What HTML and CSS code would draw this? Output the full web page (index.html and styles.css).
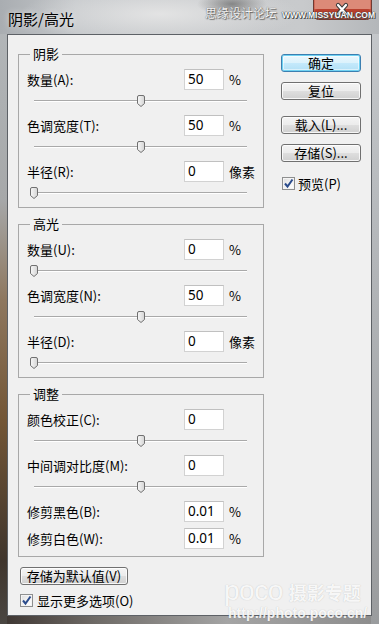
FILE: index.html
```html
<!DOCTYPE html>
<html lang="zh-CN">
<head>
<meta charset="utf-8">
<title>阴影/高光</title>
<link rel="stylesheet" href="styles.css">
</head>
<body>
<div class="window">
  <div class="titlebar">
    <span class="title">阴影/高光</span>
    <span class="capx"><svg width="59" height="20" viewBox="0 0 59 20"><rect x="0.5" y="-5" width="58" height="24.5" rx="5" ry="5" fill="#c8503e" stroke="#6e3a32"/><rect x="1.5" y="9" width="56" height="9.5" rx="4" ry="4" fill="#b8402e"/><rect x="1.5" y="0" width="56" height="9" fill="#dc8a78"/><path d="M25 5 L33 14 M33 5 L25 14" stroke="#3a3a3a" stroke-width="4.2" stroke-linecap="round" fill="none"/><path d="M25 5 L33 14 M33 5 L25 14" stroke="#ffffff" stroke-width="2.2" stroke-linecap="round" fill="none"/></svg></span>
    <span class="wm-top"><span class="wm-cn">思缘设计论坛</span><span class="wm-en">WWW.MISSYUAN.COM</span></span>
  </div>
  <div class="client">
    <div class="main">
      <div class="left">
        <fieldset class="group">
          <legend>阴影</legend>
          <div class="row"><span class="label">数量(A):</span><span class="input">50</span><span class="unit">%</span></div>
          <div class="slider"><div class="track"></div><span class="thumb" style="left:50%"></span></div>
          <div class="row"><span class="label">色调宽度(T):</span><span class="input">50</span><span class="unit">%</span></div>
          <div class="slider"><div class="track"></div><span class="thumb" style="left:50%"></span></div>
          <div class="row"><span class="label">半径(R):</span><span class="input">0</span><span class="unit">像素</span></div>
          <div class="slider"><div class="track"></div><span class="thumb" style="left:0%"></span></div>
        </fieldset>
        <fieldset class="group">
          <legend>高光</legend>
          <div class="row"><span class="label">数量(U):</span><span class="input">0</span><span class="unit">%</span></div>
          <div class="slider"><div class="track"></div><span class="thumb" style="left:0%"></span></div>
          <div class="row"><span class="label">色调宽度(N):</span><span class="input">50</span><span class="unit">%</span></div>
          <div class="slider"><div class="track"></div><span class="thumb" style="left:50%"></span></div>
          <div class="row"><span class="label">半径(D):</span><span class="input">0</span><span class="unit">像素</span></div>
          <div class="slider"><div class="track"></div><span class="thumb" style="left:0%"></span></div>
        </fieldset>
        <fieldset class="group group-last">
          <legend>调整</legend>
          <div class="row"><span class="label">颜色校正(C):</span><span class="input">0</span><span class="unit"></span></div>
          <div class="slider"><div class="track"></div><span class="thumb" style="left:50%"></span></div>
          <div class="row"><span class="label">中间调对比度(M):</span><span class="input">0</span><span class="unit"></span></div>
          <div class="slider"><div class="track"></div><span class="thumb" style="left:50%"></span></div>
          <div class="row row-tight"><span class="label">修剪黑色(B):</span><span class="input">0.01</span><span class="unit">%</span></div>
          <div class="row"><span class="label">修剪白色(W):</span><span class="input">0.01</span><span class="unit">%</span></div>
        </fieldset>
      </div>
      <div class="right">
        <div class="btn btn-default btn-ok">确定</div>
        <div class="btn btn-reset">复位</div>
        <div class="btn btn-load">载入(L)...</div>
        <div class="btn btn-save">存储(S)...</div>
        <div class="check check-preview">
          <span class="box"><svg width="11" height="11" viewBox="0 0 11 11"><path d="M2 5.5 L4.5 8.5 L9.5 1.5" stroke="#2b4c8c" stroke-width="2" fill="none"/></svg></span>
          <span>预览(P)</span>
        </div>
      </div>
    </div>
    <div class="bottom">
      <div class="btn btn-wide">存储为默认值(V)</div>
      <div class="check check-more">
        <span class="box"><svg width="11" height="11" viewBox="0 0 11 11"><path d="M2 5.5 L4.5 8.5 L9.5 1.5" stroke="#2b4c8c" stroke-width="2" fill="none"/></svg></span>
        <span>显示更多选项(O)</span>
      </div>
    </div>
  </div>
  <div class="wm-bottom">
    <div class="wm-line1"><span class="wm-poco">poco</span><span class="wm-zt">摄影专题</span></div>
    <div class="wm-url">http://photo.poco.cn/</div>
  </div>
</div>
</body>
</html>
```

FILE: styles.css
```css
* { box-sizing: border-box; }
html, body { margin: 0; padding: 0; }
body {
  width: 379px;
  height: 624px;
  overflow: hidden;
  font-family: "Noto Sans CJK SC", "Noto Sans", sans-serif;
  font-size: 13px;
  color: #000;
  background: #b8bbbe;
}
.window {
  position: relative;
  width: 379px;
  height: 624px;
  display: flex;
  flex-direction: column;
  background:
    linear-gradient(to bottom, #b4b8bb 0px, #a6a8a9 200px, #8e775e 300px, #735636 420px, #3f352c 560px, #4a4642 624px) left top / 7px 100% no-repeat,
    linear-gradient(to bottom, #c6c9cc 0px, #b0b3b6 300px, #9a9c9e 624px) right top / 8px 100% no-repeat,
    linear-gradient(to right, #3c3430 0%, #6e6a66 25%, #a4a4a4 60%, #8c8c8c 100%) left bottom / 100% 8px no-repeat,
    #b8bbbe;
}
.titlebar {
  position: relative;
  height: 34px;
  flex: none;
  display: flex;
  align-items: flex-start;
  padding: 0 7px 0 8px;
  background:
    radial-gradient(ellipse 35px 12px at 232px 4px, rgba(70,70,70,0.55), rgba(70,70,70,0)),
    radial-gradient(ellipse 140px 30px at 160px 14px, rgba(232,232,232,0.85), rgba(232,232,232,0)),
    linear-gradient(to right, #a9adb1 0%, #c4c7ca 20%, #c8cacc 80%, #b4b7ba 100%);
}
.title {
  font-size: 15px;
  line-height: 20px;
  margin-top: 9px;
  white-space: nowrap;
  text-shadow: 0 0 6px rgba(255,255,255,0.8);
}
.capx {
  margin-left: auto;
  flex: none;
  width: 59px;
  height: 20px;
  line-height: 0;
  display: block;
}
.wm-top {
  position: absolute;
  z-index: 2;
  left: 205px;
  top: 5px;
  display: flex;
  align-items: baseline;
  gap: 5px;
  white-space: nowrap;
}
.wm-cn {
  font-size: 12px;
  line-height: 16px;
  color: #f2f2f2;
  text-shadow: 0 0 1px #555, 1px 1px 1px #666;
}
.wm-en {
  font-family: "Liberation Sans", sans-serif;
  font-weight: bold;
  font-size: 8.5px;
  color: #fafafa;
  text-shadow: 0 0 1px #333, 0 0 1px #333, 1px 1px 0 #555;
}
.client {
  flex: 1;
  margin: 0 7px 8px 7px;
  background: #f0f0f0;
  border: 1px solid #5d6166;
  padding: 11px 10px 0 10px;
  display: flex;
  flex-direction: column;
}
.main {
  display: flex;
  align-items: flex-start;
  gap: 17px;
}
.left {
  width: 246px;
  display: flex;
  flex-direction: column;
  gap: 8px;
}
.group {
  margin: 0;
  padding: 7px 8px 0 8px;
  border: 1px solid #a8a8a8;
  min-width: 0;
}
.group-last { padding-bottom: 7px; }
.group legend {
  margin-left: 3px;
  padding: 0 3px;
  font-size: 13px;
  line-height: 16px;
}
.row {
  display: flex;
  align-items: center;
  height: 21px;
}
.row-tight { margin-bottom: 6px; }
.label {
  flex: 1;
  line-height: 16px;
}
.input {
  width: 40px;
  height: 21px;
  background: #fff;
  border: 1px solid #d2d2d2;
  border-top-color: #c0c0c0;
  padding-left: 3px;
  font-family: "Noto Sans", sans-serif;
  font-size: 13.5px;
  line-height: 19px;
}
.unit {
  width: 31px;
  padding-left: 5px;
  line-height: 16px;
}
.slider {
  position: relative;
  width: 213px;
  margin-left: 7px;
  height: 25px;
  padding-top: 10px;
}
.track {
  height: 2px;
  border-top: 1px solid #a9a9a9;
  border-bottom: 1px solid #ffffff;
}
.thumb {
  position: absolute;
  top: 5px;
  width: 8px;
  height: 12px;
  margin-left: -4px;
  background: url("data:image/svg+xml,%3Csvg xmlns='http://www.w3.org/2000/svg' width='8' height='12' viewBox='0 0 8 12'%3E%3Cdefs%3E%3ClinearGradient id='g' x1='0' x2='1'%3E%3Cstop offset='0' stop-color='%23f8f8f8'/%3E%3Cstop offset='1' stop-color='%23d4d4d4'/%3E%3C/linearGradient%3E%3C/defs%3E%3Cpath d='M0.5 2 Q0.5 0.5 2 0.5 H6 Q7.5 0.5 7.5 2 V8.5 L4 11.5 L0.5 8.5 Z' fill='url(%23g)' stroke='%23707070'/%3E%3C/svg%3E") no-repeat;
}
.right {
  width: 80px;
  display: flex;
  flex-direction: column;
  padding-top: 8px;
}
.btn {
  height: 18px;
  border: 1px solid #707070;
  border-radius: 3px;
  background: linear-gradient(to bottom, #f4f4f4 0%, #ececec 48%, #dedede 52%, #d0d0d0 100%);
  box-shadow: inset 0 0 0 1px rgba(255,255,255,0.8);
  display: flex;
  align-items: center;
  justify-content: center;
  font-size: 13px;
  line-height: 16px;
  white-space: nowrap;
}
.btn-default {
  border-color: #3c7fb1;
  background: linear-gradient(to bottom, #ecf8fd 0%, #dcf2fc 48%, #c4e9fb 52%, #b2e0f6 100%);
  box-shadow: inset 0 0 0 1px #6fd2f2, inset 0 0 0 2px rgba(255,255,255,0.5);
}
.btn-reset { margin-top: 10px; }
.btn-load { margin-top: 16px; }
.btn-save { margin-top: 10px; }
.check {
  display: flex;
  align-items: center;
  gap: 3px;
  height: 15px;
  line-height: 15px;
  white-space: nowrap;
}
.check-preview { margin-top: 14px; padding-left: 1px; }
.box {
  width: 13px;
  height: 13px;
  border: 1px solid #8e8f8f;
  background: linear-gradient(135deg, #dcdcdc 0%, #f6f6f6 60%, #ffffff 100%);
  box-shadow: inset 0 0 0 1px #f4f4f4;
  display: flex;
  align-items: center;
  justify-content: center;
  flex: none;
}
.bottom {
  display: flex;
  flex-direction: column;
  align-items: flex-start;
  padding-left: 2px;
}
.btn-wide {
  margin-top: 10px;
  width: 108px;
}
.check-more { margin-top: 8px; gap: 4px; }
.wm-bottom {
  position: absolute;
  left: 224px;
  top: 580px;
  color: rgba(255,255,255,0.9);
  text-shadow: 0 0 1px rgba(90,90,90,0.35);
  pointer-events: none;
}
.wm-line1 {
  display: flex;
  align-items: baseline;
  gap: 6px;
  height: 24px;
}
.wm-poco {
  font-family: "Liberation Sans", sans-serif;
  font-size: 28px;
  line-height: 22px;
  letter-spacing: -0.5px;
}
.wm-zt {
  font-size: 18px;
  font-weight: bold;
  line-height: 22px;
}
.wm-url {
  font-family: "Liberation Sans", sans-serif;
  font-weight: bold;
  font-size: 14px;
  line-height: 14px;
  margin-left: 4px;
  margin-top: 2px;
}
```
